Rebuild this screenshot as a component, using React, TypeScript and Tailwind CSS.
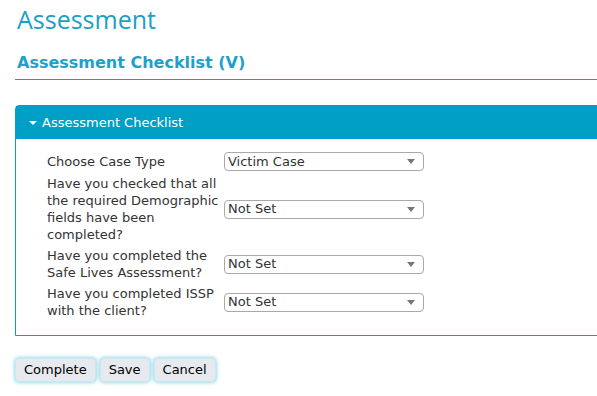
const rows = [
  { label: "Choose Case Type", value: "Victim Case" },
  {
    label: "Have you checked that all the required Demographic fields have been completed?",
    value: "Not Set",
  },
  { label: "Have you completed the Safe Lives Assessment?", value: "Not Set" },
  { label: "Have you completed ISSP with the client?", value: "Not Set" },
];

function SelectBox({ value }: { value: string }) {
  return (
    <div className="w-[200px] h-[19px] border border-[#a9a9a9] rounded-[4px] bg-white flex items-center justify-between pl-[3px] pr-[8px] text-[13px] text-[#333]">
      <span>{value}</span>
      <span className="w-0 h-0 border-l-[4px] border-r-[4px] border-t-[5px] border-l-transparent border-r-transparent border-t-[#777]" />
    </div>
  );
}

function Btn({ children }: { children: string }) {
  return (
    <button className="h-[24px] px-[8px] rounded-[4px] bg-[#e6e9ed] border border-[#c8e8f2] shadow-[0_0_4px_#6cc6e0] text-[13px] text-black">
      {children}
    </button>
  );
}

export default function App() {
  return (
    <div className="w-[597px] h-[396px] bg-white overflow-hidden font-['DejaVu_Sans',Verdana,sans-serif]">
      <h1 className="pl-[17px] pt-[3px] text-[25px] leading-[32px] text-[#1aa0c6] font-['Open_Sans',sans-serif]">
        Assessment
      </h1>
      <h2 className="mt-[17px] ml-[15px] pl-[2px] pb-[5px] text-[16px] font-bold text-[#1ea0c8] leading-[22px]">
        Assessment Checklist (V)
      </h2>
      <div className="ml-[15px] h-px bg-[#18a0c2]" />
      <div className="mt-[25px] ml-[15px] mr-[-10px] border-[1px] border-solid border-[#05a0c5] rounded-tl-[4px]">
        <div className="h-[33px] bg-[#00a0c6] flex items-center pl-[13px] text-white text-[13px]">
          <span className="w-0 h-0 border-l-[4px] border-r-[4px] border-t-[4px] border-l-transparent border-r-transparent border-t-white mr-[5px]" />
          Assessment Checklist
        </div>
        <div className="pt-[13px] pb-[16px] pl-[31px] flex flex-col gap-[4px]">
          {rows.map((r) => (
            <div key={r.label} className="flex items-center">
              <div className="w-[177px] text-[13px] leading-[17px] text-[#333]">{r.label}</div>
              <SelectBox value={r.value} />
            </div>
          ))}
        </div>
      </div>
      <div className="mt-[22px] ml-[15px] flex gap-[4px]">
        <Btn>Complete</Btn>
        <Btn>Save</Btn>
        <Btn>Cancel</Btn>
      </div>
    </div>
  );
}
